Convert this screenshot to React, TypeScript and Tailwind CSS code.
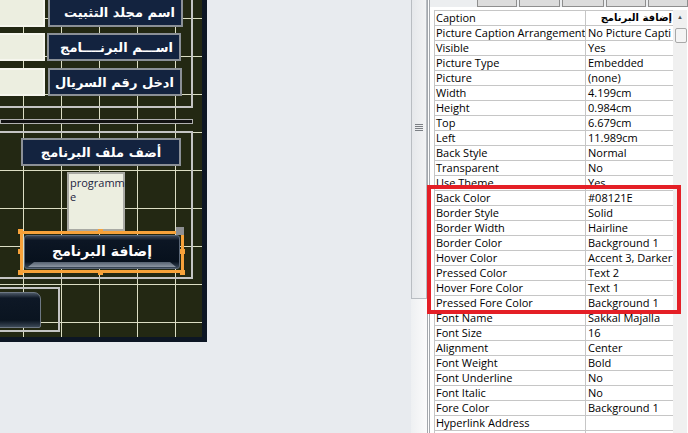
import React from 'react';

const props: [string, string][] = [
  ['Caption', 'إضافة البرنامج'],
  ['Picture Caption Arrangement', 'No Picture Capti'],
  ['Visible', 'Yes'],
  ['Picture Type', 'Embedded'],
  ['Picture', '(none)'],
  ['Width', '4.199cm'],
  ['Height', '0.984cm'],
  ['Top', '6.679cm'],
  ['Left', '11.989cm'],
  ['Back Style', 'Normal'],
  ['Transparent', 'No'],
  ['Use Theme', 'Yes'],
  ['Back Color', '#08121E'],
  ['Border Style', 'Solid'],
  ['Border Width', 'Hairline'],
  ['Border Color', 'Background 1'],
  ['Hover Color', 'Accent 3, Darker'],
  ['Pressed Color', 'Text 2'],
  ['Hover Fore Color', 'Text 1'],
  ['Pressed Fore Color', 'Background 1'],
  ['Font Name', 'Sakkal Majalla'],
  ['Font Size', '16'],
  ['Alignment', 'Center'],
  ['Font Weight', 'Bold'],
  ['Font Underline', 'No'],
  ['Font Italic', 'No'],
  ['Fore Color', 'Background 1'],
  ['Hyperlink Address', ''],
  ['', ''],
];

const arabic = { fontFamily: '"DejaVu Sans", sans-serif' };

function Label({ text, className }: { text: string; className: string }) {
  return (
    <div
      dir="rtl"
      style={arabic}
      className={`absolute flex items-center px-[6px] bg-[#13233f] border-2 border-[#8b9097] text-white font-bold text-[13px] leading-none whitespace-nowrap overflow-hidden ${className}`}
    >
      {text}
    </div>
  );
}

function Input({ className }: { className: string }) {
  return <div className={`absolute bg-[#eceee0] border-2 border-[#f6f6ee] ${className}`} />;
}

function Handle({ className }: { className: string }) {
  return <div className={`absolute w-[5px] h-[5px] bg-[#f7a23a] ${className}`} />;
}

function FormCanvas() {
  return (
    <div className="relative w-[207px] h-[342px] border-r-[5px] border-b-[5px] border-[#0d1624] bg-[#232813] bg-[linear-gradient(to_right,#dcdec4_1px,transparent_1px),linear-gradient(to_bottom,#dcdec4_1px,transparent_1px)] bg-[size:38px_38px] bg-[position:23px_18px] overflow-hidden">
      {/* sections */}
      <div className="absolute left-[-3px] top-[-3px] w-[196px] h-[111px] border-2 border-[#c4c4c4]" />
      <div className="absolute left-0 top-[119px] w-[193px] h-[5px] border border-[#b0b0b0] bg-[#111]" />
      <div className="absolute left-[-3px] top-[131px] w-[196px] h-[148px] border-2 border-[#c4c4c4]" />
      <div className="absolute left-[-3px] top-[287px] w-[63px] h-[45px] border-2 border-[#c4c4c4]" />

      <Input className="left-[-2px] top-[-2px] w-[47px] h-[29px]" />
      <Input className="left-[-2px] top-[33px] w-[47px] h-[28px]" />
      <Input className="left-[-2px] top-[68px] w-[47px] h-[28px]" />

      <Label text="اسم مجلد التثبيت" className="left-[48px] top-[-2px] w-[135px] h-[29px]" />
      <Label text="اســـم البرنــــامج" className="left-[47px] top-[33px] w-[134px] h-[28px]" />
      <Label text="ادخل رقم السريال" className="left-[48px] top-[68px] w-[134px] h-[28px]" />
      <Label text="أضف ملف البرنامج" className="left-[21px] top-[138px] w-[160px] h-[28px] justify-center" />

      <div
        className="absolute left-[67px] top-[172px] w-[58px] h-[59px] bg-[#eceee0] border-2 border-[#a9aaa4] px-[1px] pt-[2px] text-[11px] leading-[14px] text-[#1c2440]"
        style={{ fontFamily: '"Open Sans", sans-serif' }}
      >
        <div>programm</div>
        <div>e</div>
      </div>

      {/* selected button */}
      <div className="absolute left-[20px] top-[231px] w-[164px] h-[42px] border-[3px] border-[#f7a23a] p-[1px]">
        <div className="relative w-full h-full rounded-[3px] bg-[linear-gradient(to_bottom,#3a4656_0%,#0c1624_14%,#07111d_80%,#3c4a5a_100%)] border border-[#5a6676] flex items-center justify-center">
          <div className="absolute left-[3px] right-[3px] bottom-[1px] h-[5px] bg-[linear-gradient(to_bottom,#55616f,#8d97a3)] [clip-path:polygon(0_100%,6px_0,calc(100%-6px)_0,100%_100%)]" />
          <span dir="rtl" style={arabic} className="relative text-white font-bold text-[14px] leading-none -mt-[2px]">
            إضافة البرنامج
          </span>
        </div>
      </div>
      <Handle className="left-[18px] top-[229px]" />
      <Handle className="left-[98px] top-[229px]" />
      <Handle className="left-[18px] top-[249px]" />
      <Handle className="left-[180px] top-[249px]" />
      <Handle className="left-[18px] top-[270px]" />
      <Handle className="left-[98px] top-[270px]" />
      <Handle className="left-[180px] top-[270px]" />
      <div className="absolute left-[176px] top-[227px] w-[8px] h-[8px] bg-[#8d8f92]" />

      {/* partial button bottom-left */}
      <div className="absolute left-[-10px] top-[292px] w-[51px] h-[36px] rounded-tr-[7px] rounded-br-[2px] border border-[#6e7884] bg-[linear-gradient(to_bottom,#4a5664_0%,#0e1826_15%,#0a1420_80%,#3b4856_100%)]" />
    </div>
  );
}

function Splitter() {
  return (
    <div className="w-[16px] flex flex-col">
      <div className="h-[299px] border-l border-r border-b border-[#b9bdc2] bg-[linear-gradient(to_right,#e6e8eb,#f2f3f4)] flex items-center justify-center">
        <div className="flex flex-col gap-[1px] mb-[44px]">
          <div className="w-[8px] h-[1px] bg-[#7b7f84]" />
          <div className="w-[8px] h-[1px] bg-[#7b7f84]" />
          <div className="w-[8px] h-[1px] bg-[#7b7f84]" />
          <div className="w-[8px] h-[1px] bg-[#7b7f84]" />
        </div>
      </div>
      <div className="flex-1 bg-[linear-gradient(to_right,#eef0f2,#fbfbfb)]" />
    </div>
  );
}

function PropertySheet() {
  return (
    <div className="relative flex-1 flex border-l-[3px] border-double border-[#a4a8ad] bg-white" style={{ fontFamily: '"Open Sans", sans-serif' }}>
      <div className="flex-1 flex flex-col">
        <div className="h-[7px] bg-[#eceef0] flex items-end pl-[47px] gap-[2px]">
          <div className="w-[40px] h-[7px] bg-[#dcdcdc] border border-t-0 border-[#8e8e8e]" />
          <div className="w-[41px] h-[7px] bg-[#dcdcdc] border border-t-0 border-[#8e8e8e]" />
          <div className="w-[42px] h-[7px] bg-[#dcdcdc] border border-t-0 border-[#8e8e8e]" />
          <div className="w-[40px] h-[7px] bg-[#dcdcdc] border border-t-0 border-[#8e8e8e]" />
          <div className="w-[40px] h-[7px] bg-[#dcdcdc] border border-t-0 border-[#8e8e8e]" />
        </div>
        <div className="flex pt-[3px] pl-[4px]">
          <div className="w-[239px] border-l border-t border-[#c6c6c6] flex flex-col">
            {props.map(([k, v], i) => (
              <div key={i} className="grid grid-cols-[151px_88px] h-[15px] border-b border-[#c6c6c6] text-[11px] leading-[14px] text-black">
                <div className="pl-[1px] border-r border-[#c6c6c6] whitespace-nowrap overflow-hidden">{k}</div>
                {i === 0 ? (
                  <div dir="rtl" style={arabic} className="pr-[2px] text-[10px] font-bold whitespace-nowrap overflow-hidden">{v}</div>
                ) : (
                  <div className="pl-[2px] border-r border-[#c6c6c6] whitespace-nowrap overflow-hidden">{v}</div>
                )}
              </div>
            ))}
          </div>
          <div className="w-[14px] bg-[#f0f0f0] flex flex-col items-center">
            <div className="h-[15px] flex items-center justify-center text-[6px] text-[#505050]">▲</div>
            <div className="mt-[3px] ml-[2px] w-[12px] h-[15px] rounded-[2px] border border-[#a8a8a8] bg-[#f4f4f4]" />
          </div>
        </div>
      </div>
      {/* highlight */}
      <div className="absolute left-[-3px] top-[185px] w-[254px] h-[129px] border-[4px] border-[#e41f26]" />
    </div>
  );
}

export default function App() {
  return (
    <div className="w-[688px] h-[433px] overflow-hidden flex bg-[#e8ebef]">
      <div className="w-[412px]">
        <FormCanvas />
      </div>
      <Splitter />
      <PropertySheet />
    </div>
  );
}
